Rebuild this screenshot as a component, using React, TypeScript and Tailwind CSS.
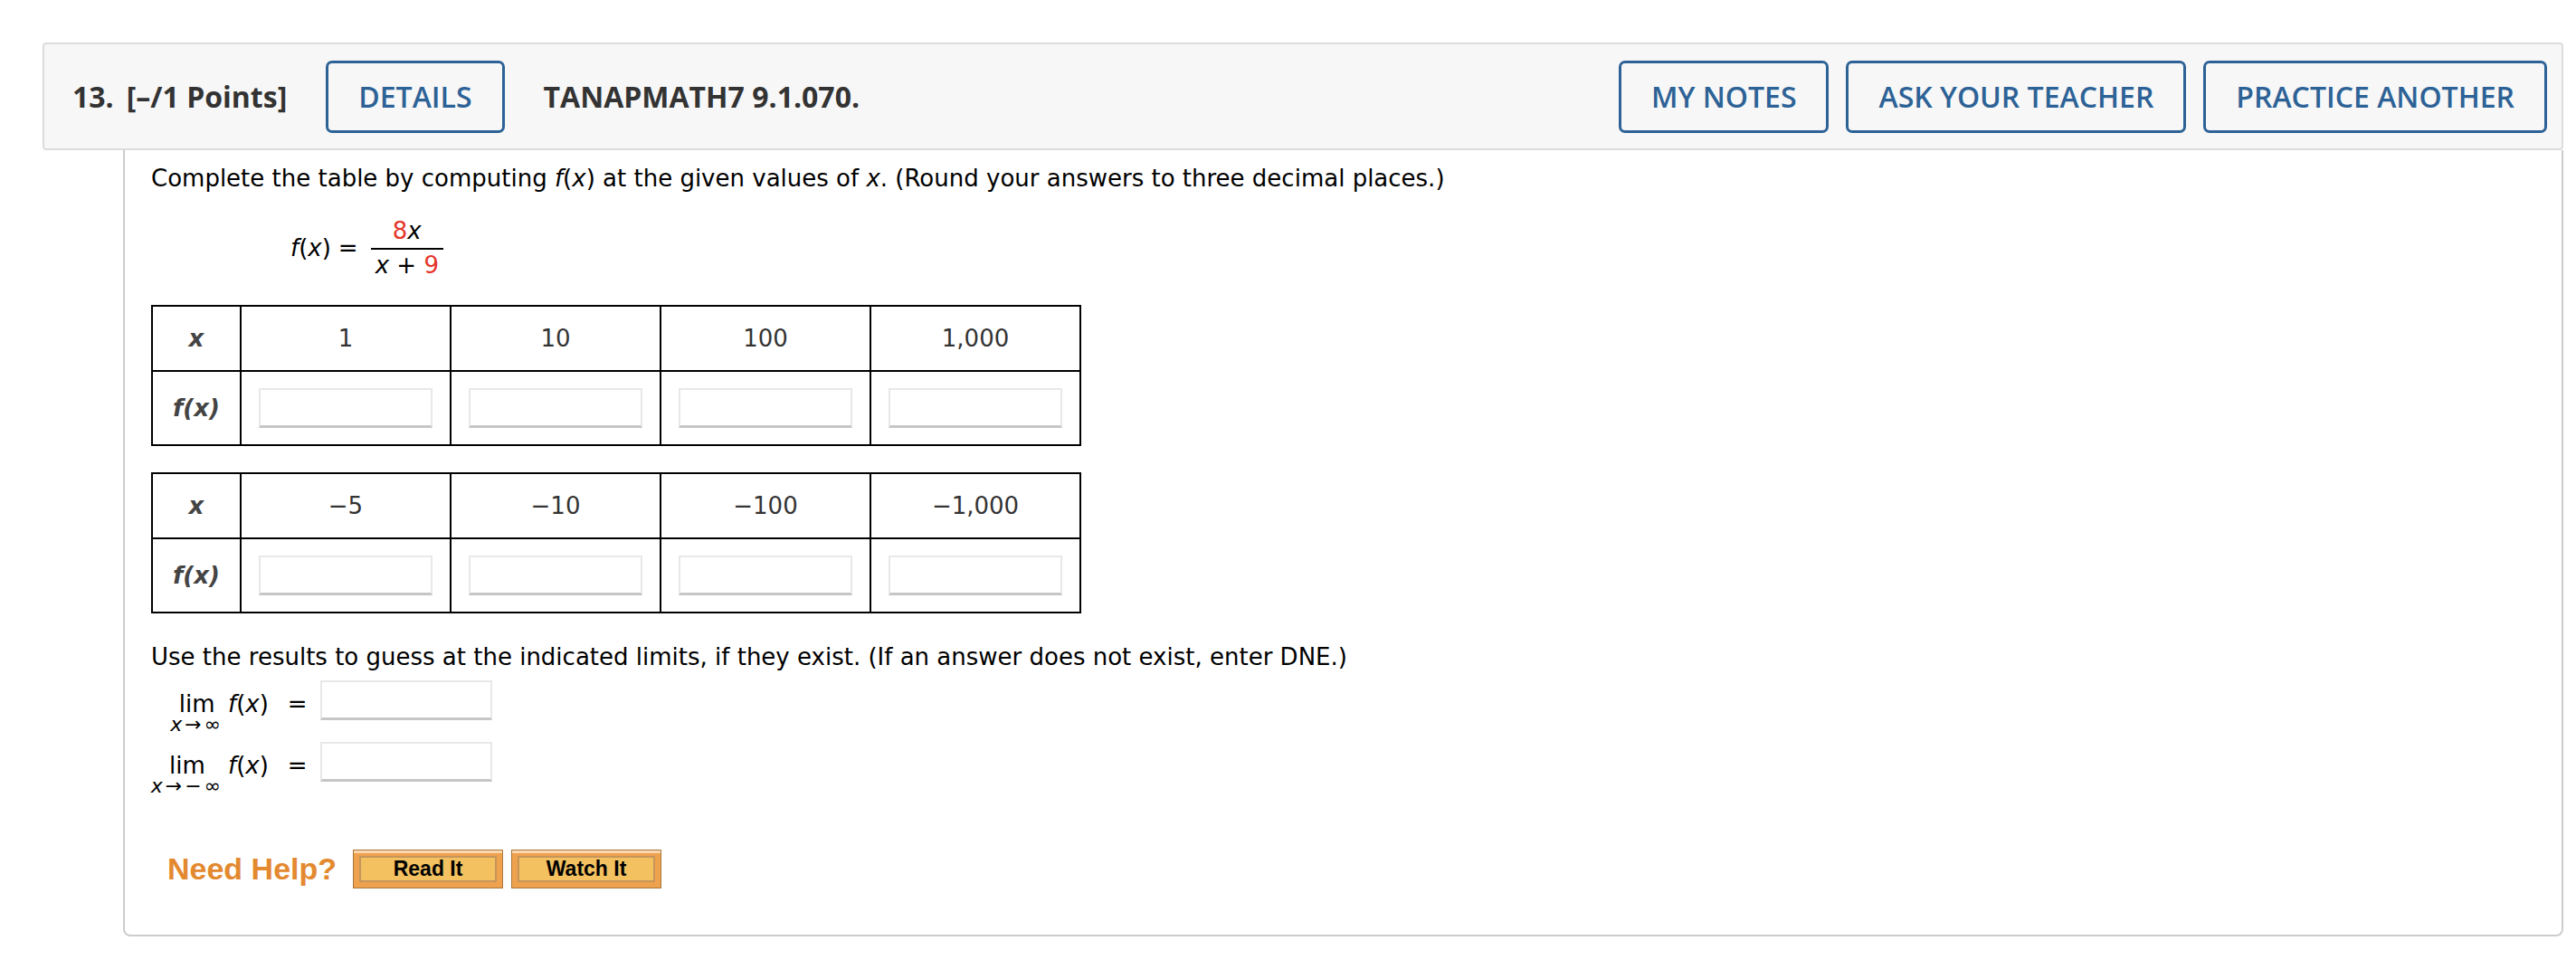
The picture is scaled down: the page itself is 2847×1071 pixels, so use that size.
import React from 'react';

const RED = 'text-[#e4352a]';

function HeaderButton({ label }: { label: string }) {
  return (
    <button className="h-[80px] shrink-0 rounded-[7px] border-[3px] border-[#2d6296] px-[33px] text-[32px] font-semibold text-[#2d6296]">
      {label}
    </button>
  );
}

function ValueTable({ values }: { values: string[] }) {
  return (
    <div className="grid w-max grid-cols-[96px_repeat(4,230px)] grid-rows-[70px_80px] gap-[2px] border-2 border-black bg-black">
      <div className="flex items-center justify-center bg-white font-bold italic text-[#444]">x</div>
      {values.map((v) => (
        <div key={v} className="flex items-center justify-center bg-white text-[#333]">
          {v}
        </div>
      ))}
      <div className="flex items-center justify-center bg-white font-bold italic text-[#444]">f(x)</div>
      {values.map((v) => (
        <div key={'in' + v} className="flex items-center justify-center bg-white">
          <input className="h-[44px] w-[192px] border-2 border-b-[3px] border-[#e8e8e8] border-b-[#c6c6c6] bg-white outline-none" />
        </div>
      ))}
    </div>
  );
}

function LimitRow({ sub }: { sub: React.ReactNode }) {
  return (
    <div className="flex h-[68px] items-start">
      <div className="mt-[11px] flex w-[80px] justify-end">
        <div className="flex flex-col items-center">
          <span className="leading-[30px]">lim</span>
          <span className="-mt-[3px] text-[22px] leading-[22px] tracking-[3px]">{sub}</span>
        </div>
      </div>
      <span className="ml-[5px] mt-[11px] leading-[30px]">
        <i>f</i>(<i>x</i>)
      </span>
      <span className="ml-[21px] mt-[11px] leading-[30px]">=</span>
      <input className="ml-[14px] h-[44px] w-[190px] border-2 border-b-[3px] border-[#e8e8e8] border-b-[#c6c6c6] bg-white outline-none" />
    </div>
  );
}

function HelpButton({ label }: { label: string }) {
  return (
    <div className="h-[43px] w-[166px] border border-[#a8763a] bg-[#efa24e] px-[6px] py-[6px] shadow-[inset_0_3px_0_#fad7b0]">
      <div className="flex h-full items-center justify-center border-2 border-[#c6955a] bg-[#f3c160] font-['Liberation_Sans',Arial,sans-serif] text-[23px] font-bold text-black">
        {label}
      </div>
    </div>
  );
}

export default function App() {
  return (
    <div className="min-h-screen bg-white pl-[47px] pr-[14px] pt-[47px]">
      {/* question header */}
      <div className="flex h-[119px] items-center rounded-[4px] border-2 border-[#dcdcdc] bg-[#f7f7f7] pl-[31px] pr-[16px] font-['Open_Sans',sans-serif] text-[32px] font-bold text-[#333]">
        <span>13.</span>
        <span className="ml-[14px]">[–/1 Points]</span>
        <div className="ml-[43px]">
          <HeaderButton label="DETAILS" />
        </div>
        <span className="ml-[43px]">TANAPMATH7 9.1.070.</span>
        <div className="ml-auto flex gap-[19px]">
          <HeaderButton label="MY NOTES" />
          <HeaderButton label="ASK YOUR TEACHER" />
          <HeaderButton label="PRACTICE ANOTHER" />
        </div>
      </div>

      {/* question body */}
      <div className="ml-[89px] rounded-b-[8px] border-x-2 border-b-2 border-[#cccccc] pb-[47px] pl-[29px] pt-[12px] font-['DejaVu_Sans',Verdana,sans-serif] text-[26px] text-black">
        <p className="leading-[39px]">
          Complete the table by computing <i>f</i>(<i>x</i>) at the given values of <i>x</i>. (Round your answers to three decimal places.)
        </p>

        <div className="ml-[154px] mt-[23px] flex items-center">
          <span>
            <i>f</i>(<i>x</i>)
          </span>
          <span className="ml-[8px]">=</span>
          <span className="ml-[14px] inline-flex flex-col items-center">
            <span className="px-[5px] pb-[4px] leading-[30px]">
              <span className={RED}>8</span>
              <i>x</i>
            </span>
            <span className="h-[2px] w-full bg-black" />
            <span className="px-[5px] pt-[2px] leading-[30px]">
              <i>x</i> + <span className={RED}>9</span>
            </span>
          </span>
        </div>

        <div className="mt-[29px]">
          <ValueTable values={['1', '10', '100', '1,000']} />
        </div>
        <div className="mt-[29px]">
          <ValueTable values={['−5', '−10', '−100', '−1,000']} />
        </div>

        <p className="mt-[29px] leading-[39px]">
          Use the results to guess at the indicated limits, if they exist. (If an answer does not exist, enter DNE.)
        </p>
        <div className="mt-[6px]">
          <LimitRow
            sub={
              <>
                <i>x</i>→∞
              </>
            }
          />
          <LimitRow
            sub={
              <>
                <i>x</i>→−∞
              </>
            }
          />
        </div>

        <div className="mt-[47px] flex items-center pl-[18px]">
          <span className="font-['Liberation_Sans',Arial,sans-serif] text-[34px] font-bold text-[#e3892f]">Need Help?</span>
          <div className="ml-[18px]">
            <HelpButton label="Read It" />
          </div>
          <div className="ml-[9px]">
            <HelpButton label="Watch It" />
          </div>
        </div>
      </div>
    </div>
  );
}
